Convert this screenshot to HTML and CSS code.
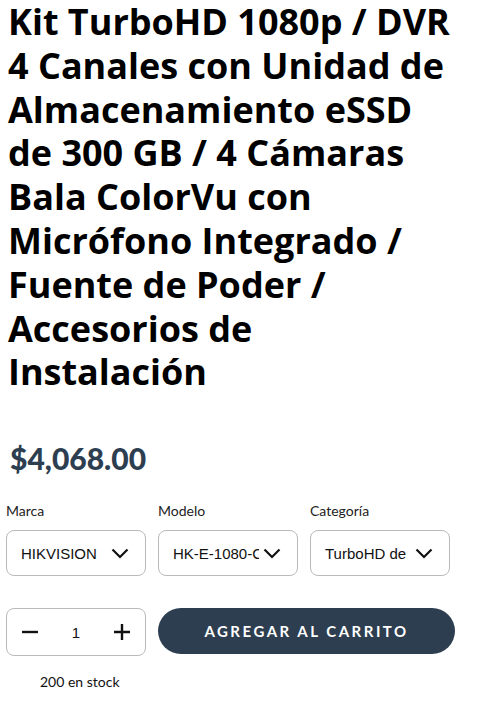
FILE: index.html
```html
<!DOCTYPE html>
<html lang="es">
<head>
    <meta charset="UTF-8">
    <meta name="viewport" content="width=device-width, initial-scale=1.0">
    <title>Kit TurboHD 1080p</title>
    <link rel="stylesheet" href="styles.css">
</head>
<body>
    <div class="product">
        <h1 class="product-title">Kit TurboHD 1080p / DVR 4 Canales con Unidad de Almacenamiento eSSD de 300 GB / 4 Cámaras Bala ColorVu con Micrófono Integrado / Fuente de Poder / Accesorios de Instalación</h1>

        <p class="price">$4,068.00</p>

        <div class="variations">
            <div class="variation">
                <label for="marca">Marca</label>
                <div class="select-box">
                    <span class="select-value" id="marca">HIKVISION</span>
                    <svg class="chevron" viewBox="0 0 18 11" width="18" height="11"><path d="M1.5 1.5l7.5 7.5 7.5-7.5" fill="none" stroke="#111" stroke-width="2.2"/></svg>
                </div>
            </div>
            <div class="variation">
                <label for="modelo">Modelo</label>
                <div class="select-box">
                    <span class="select-value" id="modelo">HK-E-1080-C</span>
                    <svg class="chevron" viewBox="0 0 18 11" width="18" height="11"><path d="M1.5 1.5l7.5 7.5 7.5-7.5" fill="none" stroke="#111" stroke-width="2.2"/></svg>
                </div>
            </div>
            <div class="variation">
                <label for="categoria">Categoría</label>
                <div class="select-box">
                    <span class="select-value" id="categoria">TurboHD de</span>
                    <svg class="chevron" viewBox="0 0 18 11" width="18" height="11"><path d="M1.5 1.5l7.5 7.5 7.5-7.5" fill="none" stroke="#111" stroke-width="2.2"/></svg>
                </div>
            </div>
        </div>

        <div class="cart-row">
            <div class="quantity">
                <button class="qty-btn" aria-label="Menos">
                    <svg viewBox="0 0 18 18" width="18" height="18"><path d="M1 9h16" stroke="#111" stroke-width="2.4"/></svg>
                </button>
                <span class="qty-value">1</span>
                <button class="qty-btn" aria-label="Más">
                    <svg viewBox="0 0 18 18" width="18" height="18"><path d="M1 9h16M9 1v16" stroke="#111" stroke-width="2.4"/></svg>
                </button>
            </div>
            <button class="add-to-cart">AGREGAR AL CARRITO</button>
        </div>

        <p class="stock">200 en stock</p>
    </div>
</body>
</html>
```

FILE: styles.css
```css
body {
    margin: 0;
    background-color: #fff;
    font-family: 'Lato', sans-serif;
    color: #111;
}

.product {
    padding: 0 6px;
}

.product-title {
    font-family: 'Open Sans', 'Noto Sans', sans-serif;
    font-weight: 700;
    font-size: 36px;
    line-height: 43.8px;
    max-width: 452px;
    margin: 0;
    padding: 0 0 0 2px;
    color: #000;
}

.price {
    font-weight: 900;
    font-size: 30px;
    color: #2d3e50;
    margin: 44px 0 0 4px;
    line-height: 40px;
}

.variations {
    display: flex;
    gap: 12px;
    margin-top: 24px;
}

.variation {
    width: 140px;
}

.variation label {
    display: block;
    font-size: 14px;
    color: #222;
    margin-bottom: 11px;
}

.select-box {
    display: flex;
    align-items: center;
    gap: 4px;
    height: 46px;
    box-sizing: border-box;
    border: 1px solid #b9b9b9;
    border-radius: 8px;
    padding: 0 16px 0 14px;
}

.select-value {
    font-family: 'Liberation Sans', Arial, sans-serif;
    font-size: 15px;
    color: #111;
    white-space: nowrap;
    overflow: hidden;
    flex: 1;
}

.chevron {
    flex: none;
}

.cart-row {
    display: flex;
    gap: 12px;
    margin-top: 32px;
}

.quantity {
    width: 140px;
    height: 48px;
    box-sizing: border-box;
    border: 1px solid #b9b9b9;
    border-radius: 8px;
    display: flex;
    align-items: center;
    justify-content: space-between;
    padding: 0 14px;
}

.qty-btn {
    background: none;
    border: none;
    padding: 0;
    display: flex;
    cursor: pointer;
}

.qty-value {
    font-family: 'Liberation Sans', Arial, sans-serif;
    font-size: 15px;
}

.add-to-cart {
    width: 297px;
    height: 46px;
    background-color: #2d3e50;
    color: #fff;
    border: none;
    border-radius: 23px;
    font-family: 'Lato', sans-serif;
    font-weight: 700;
    font-size: 15px;
    letter-spacing: 2.5px;
    cursor: pointer;
}

.stock {
    font-size: 14px;
    margin: 17px 0 0 34px;
}
```
